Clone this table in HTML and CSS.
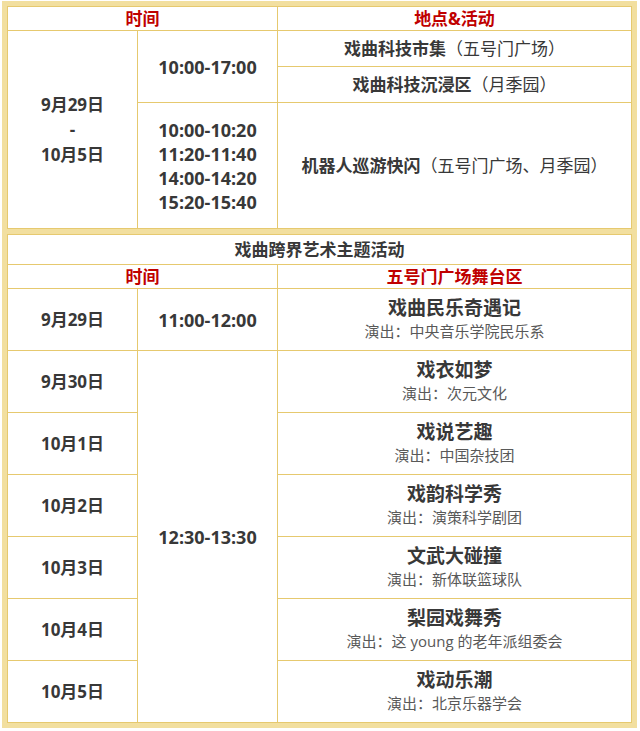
FILE: index.html
```html
<!DOCTYPE html>
<html lang="zh-CN">
<head>
<meta charset="utf-8">
<title>活动日程</title>
<link rel="stylesheet" href="styles.css">
</head>
<body>
<div class="page">
  <div class="box box-top">
    <table class="sched">
      <colgroup><col class="c1"><col class="c2"><col class="c3"></colgroup>
      <tr class="head">
        <td colspan="2" class="red">时间</td>
        <td class="red">地点&amp;活动</td>
      </tr>
      <tr class="r36">
        <td rowspan="3" class="bold lines25">9月29日<br>-<br>10月5日</td>
        <td rowspan="2" class="bold time">10:00-17:00</td>
        <td class="bold">戏曲科技市集<span class="norm">（五号门广场）</span></td>
      </tr>
      <tr class="r36">
        <td class="bold">戏曲科技沉浸区<span class="norm">（月季园）</span></td>
      </tr>
      <tr class="r126">
        <td class="bold time lines24">10:00-10:20<br>11:20-11:40<br>14:00-14:20<br>15:20-15:40</td>
        <td class="bold">机器人巡游快闪<span class="norm">（五号门广场、月季园）</span></td>
      </tr>
    </table>
  </div>
  <div class="box box-bottom">
    <table class="sched">
      <colgroup><col class="c1"><col class="c2"><col class="c3"></colgroup>
      <tr class="title">
        <td colspan="3" class="bold">戏曲跨界艺术主题活动</td>
      </tr>
      <tr class="head">
        <td colspan="2" class="red">时间</td>
        <td class="red">五号门广场舞台区</td>
      </tr>
      <tr class="r62">
        <td class="bold">9月29日</td>
        <td class="bold time">11:00-12:00</td>
        <td><div class="show">戏曲民乐奇遇记</div><div class="by">演出：中央音乐学院民乐系</div></td>
      </tr>
      <tr class="r62">
        <td class="bold">9月30日</td>
        <td rowspan="6" class="bold time">12:30-13:30</td>
        <td><div class="show">戏衣如梦</div><div class="by">演出：次元文化</div></td>
      </tr>
      <tr class="r62">
        <td class="bold">10月1日</td>
        <td><div class="show">戏说艺趣</div><div class="by">演出：中国杂技团</div></td>
      </tr>
      <tr class="r62">
        <td class="bold">10月2日</td>
        <td><div class="show">戏韵科学秀</div><div class="by">演出：演策科学剧团</div></td>
      </tr>
      <tr class="r62">
        <td class="bold">10月3日</td>
        <td><div class="show">文武大碰撞</div><div class="by">演出：新体联篮球队</div></td>
      </tr>
      <tr class="r62">
        <td class="bold">10月4日</td>
        <td><div class="show">梨园戏舞秀</div><div class="by">演出：这 young 的老年派组委会</div></td>
      </tr>
      <tr class="r62">
        <td class="bold">10月5日</td>
        <td><div class="show">戏动乐潮</div><div class="by">演出：北京乐器学会</div></td>
      </tr>
    </table>
  </div>
</div>
</body>
</html>
```
FILE: styles.css
```css
html, body {
  margin: 0;
  padding: 0;
  background: #ffffff;
}

body {
  font-family: "Open Sans", "Noto Sans CJK SC", sans-serif;
  color: #383838;
}

.page {
  padding: 1px 3px 0 2px;
}

.box {
  border: 5px solid #f2df9f;
  box-shadow: inset 0 0 0 1px #e2c465;
}

.box-top {
  border-bottom-width: 3px;
}

.box-bottom {
  border-top-width: 2px;
}

.sched {
  width: 100%;
  border-collapse: collapse;
  table-layout: fixed;
}

.c1 { width: 130px; }
.c2 { width: 140px; }

.sched td {
  border: 1px solid #e6c96f;
  text-align: center;
  vertical-align: middle;
  padding: 0;
  font-size: 17px;
  line-height: 22px;
}

.head td {
  height: 23px;
}

.title td {
  height: 29px;
}

.r36 td { height: 35px; }
.r126 td { height: 125px; }
.r62 td { height: 61px; }

.red {
  color: #c00000;
  font-weight: 700;
}

.bold {
  font-weight: 700;
}

.sched td.time {
  font-size: 18px;
}

.norm {
  font-weight: 400;
}

.lines25 { line-height: 25px !important; }
.lines24 { line-height: 24px !important; }

.show {
  font-weight: 700;
  font-size: 19px;
  line-height: 23px;
}

.by {
  font-size: 15px;
  line-height: 22px;
  color: #595959;
}
```
